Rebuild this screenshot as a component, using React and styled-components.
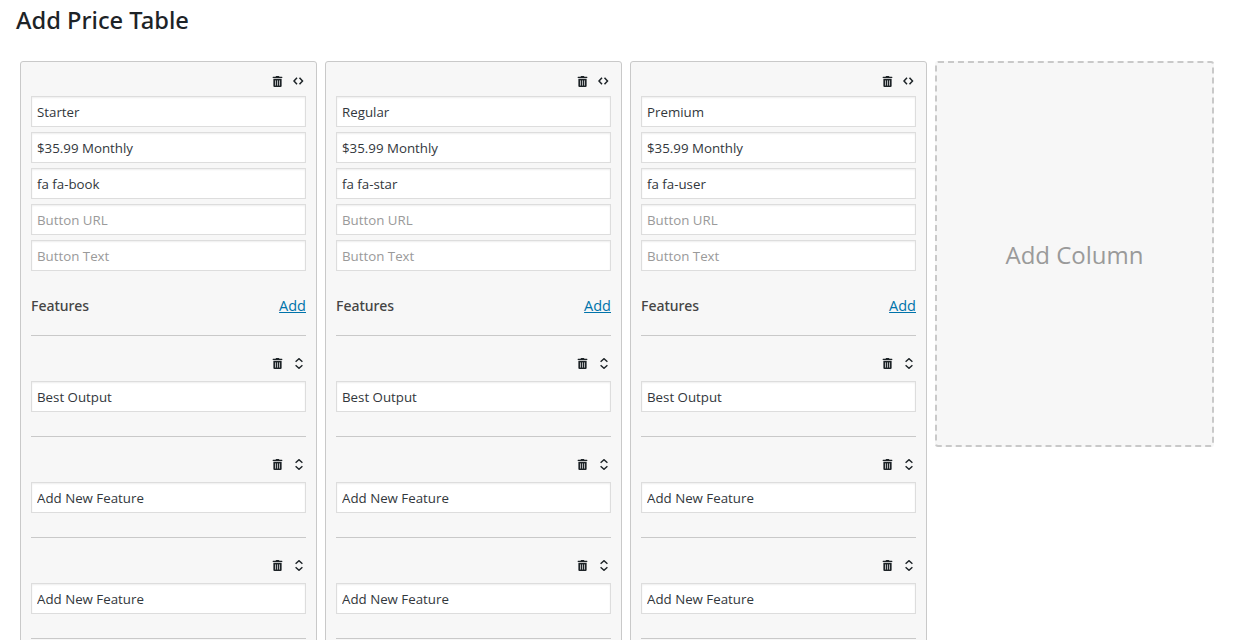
import React from 'react'
import styled, { createGlobalStyle } from 'styled-components'
import { FaTrashAlt } from 'react-icons/fa'

const GlobalStyle = createGlobalStyle`
  html, body {
    margin: 0;
    padding: 0;
    background: #fff;
  }
  body {
    font-family: "Open Sans", "Noto Sans", sans-serif;
    color: #32373c;
  }
`

const columns = [
  { title: 'Starter', icon: 'fa fa-book' },
  { title: 'Regular', icon: 'fa fa-star' },
  { title: 'Premium', icon: 'fa fa-user' },
]

const features = ['Best Output', 'Add New Feature', 'Add New Feature', 'Add New Feature']

const CodeIcon = () => (
  <svg width="11" height="8" viewBox="0 0 11 8" fill="none" stroke="#1d2327" strokeWidth="1.5">
    <path d="M4 .8 1 4l3 3.200" />
    <path d="M6.500 .8 9.500 4l-3 3.200" />
  </svg>
)

const SortIcon = () => (
  <svg width="8" height="11" viewBox="0 0 8 11" fill="none" stroke="#1d2327" strokeWidth="1.4">
    <path d="M.6 3.800 4 .7l3.400 3.100" />
    <path d="M.6 7.200 4 10.300l3.400-3.100" />
  </svg>
)

const App = () => (
  <Page>
    <GlobalStyle />
    <Title>Add Price Table</Title>
    <Columns>
      {columns.map((col) => (
        <Card key={col.title}>
          <Actions>
            <IconButton><FaTrashAlt /></IconButton>
            <IconButton><CodeIcon /></IconButton>
          </Actions>
          <Fields>
            <Input defaultValue={col.title} />
            <Input defaultValue="$35.99 Monthly" />
            <Input defaultValue={col.icon} />
            <Input placeholder="Button URL" />
            <Input placeholder="Button Text" />
          </Fields>
          <FeaturesHeader>
            <FeaturesTitle>Features</FeaturesTitle>
            <AddLink href="#">Add</AddLink>
          </FeaturesHeader>
          {features.map((feature, index) => (
            <FeatureRow key={index}>
              <FeatureActions>
                <IconButton><FaTrashAlt /></IconButton>
                <IconButton><SortIcon /></IconButton>
              </FeatureActions>
              <Input defaultValue={feature} />
            </FeatureRow>
          ))}
        </Card>
      ))}
      <AddColumn>Add Column</AddColumn>
    </Columns>
  </Page>
)

export default App

const Page = styled.div`
  height: 640px;
  overflow: hidden;
  box-sizing: border-box;
  padding: 5px 25px 0 16px;
`

const Title = styled.h1`
  margin: 0 0 25px;
  font-family: "Noto Sans", "Open Sans", sans-serif;
  font-size: 23.700px;
  line-height: 31px;
  font-weight: 500;
  color: #1d2327;
`

const Columns = styled.div`
  display: flex;
  align-items: flex-start;
  gap: 8px;
  padding-left: 4px;
`

const Card = styled.div`
  box-sizing: border-box;
  width: 297px;
  flex: none;
  padding: 10px;
  background: #f7f7f7;
  border: 1px solid #c9c9c9;
  border-radius: 3px;
`

const Actions = styled.div`
  display: flex;
  justify-content: flex-end;
  align-items: center;
  gap: 6px;
  height: 18px;
  margin-bottom: 6px;
`

const IconButton = styled.span`
  display: flex;
  align-items: center;
  justify-content: center;
  width: 15px;
  height: 15px;
  color: #1d2327;
  font-size: 11px;
`

const Fields = styled.div`
  display: flex;
  flex-direction: column;
  gap: 5px;
`

const Input = styled.input`
  display: block;
  box-sizing: border-box;
  width: 100%;
  height: 31px;
  padding: 0 5px;
  font-family: inherit;
  font-size: 13.3px;
  color: #32373c;
  background: #fff;
  border: 1px solid #ddd;
  border-radius: 0;
  box-shadow: inset 0 1px 2px rgba(0, 0, 0, 0.07);
  outline: none;

  &::placeholder {
    color: #9a9a9a;
    opacity: 1;
  }
`

const FeaturesHeader = styled.div`
  display: flex;
  justify-content: space-between;
  align-items: center;
  box-sizing: border-box;
  height: 65px;
  padding-top: 4px;
  border-bottom: 1px solid #c9c9c9;
`

const FeaturesTitle = styled.span`
  font-family: "Noto Sans", "Open Sans", sans-serif;
  font-size: 14px;
  font-weight: 500;
  color: #444;
`

const AddLink = styled.a`
  font-size: 14.500px;
  color: #0073aa;
  text-decoration: underline;
`

const FeatureRow = styled.div`
  padding: 18px 0 24px;
  border-bottom: 1px solid #c9c9c9;
`

const FeatureActions = styled(Actions)`
  margin-bottom: 9px;
`

const AddColumn = styled.div`
  box-sizing: border-box;
  width: 279px;
  height: 386px;
  flex: none;
  display: flex;
  align-items: center;
  justify-content: center;
  font-size: 24px;
  color: #9a9a9a;
  background: #f7f7f7;
  border: 2px dashed #c9c9c9;
  border-radius: 3px;
`
